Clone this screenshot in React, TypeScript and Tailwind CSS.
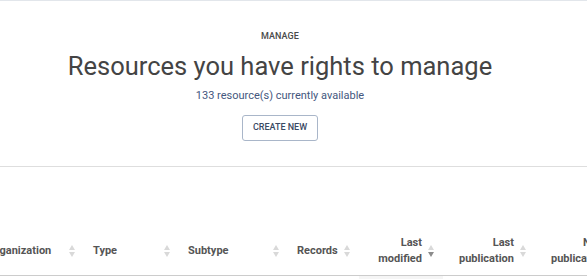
import React from 'react';

type Col = {
  label: React.ReactNode;
  width: string;
  align: 'left' | 'right';
  sort?: 'none' | 'desc';
};

// table header columns, the first one and the last one run past the viewport
const COLUMNS: Col[] = [
  { label: 'Organization', width: 'w-[105px]', align: 'left' },
  { label: 'Type', width: 'w-[95px]', align: 'left' },
  { label: 'Subtype', width: 'w-[109px]', align: 'left' },
  { label: 'Records', width: 'w-[71px]', align: 'left' },
  { label: <>Last<br />modified</>, width: 'w-[84px]', align: 'right', sort: 'desc' },
  { label: <>Last<br />publication</>, width: 'w-[92px]', align: 'right' },
  { label: <>Next<br />publication</>, width: 'w-[92px]', align: 'right' },
];

const SortIcon = ({ dir = 'none' }: { dir?: 'none' | 'desc' }) => (
  <svg width="6" height="12" viewBox="0 0 6 12" className="shrink-0">
    <path d="M3 0 L6 5 H0 Z" fill="#d9d9d9" />
    <path d="M0 7 H6 L3 12 Z" fill={dir === 'desc' ? '#8c8c8c' : '#d9d9d9'} />
  </svg>
);

export default function App() {
  return (
    <div
      className="w-[587px] h-[279px] overflow-hidden bg-white"
      style={{ fontFamily: 'Roboto, "Liberation Sans", sans-serif' }}
    >
      {/* Page header */}
      <div className="border-t border-b border-t-[#e2e6eb] border-b-[#dedede] pb-[25px]">
        <div className="w-[560px] flex flex-col items-center pt-[29px]">
          <p className="text-[9px] leading-[12px] font-medium text-[#4a4a4a] tracking-[0.1px]">MANAGE</p>
          <h1 className="mt-[8px] text-[25.5px] leading-[32px] font-normal text-[#444444]">
            Resources you have rights to manage
          </h1>
          <p className="mt-[7px] text-[11px] leading-[14px] text-[#44577e]">
            133 resource(s) currently available
          </p>
          <button className="mt-[12px] h-[26px] px-[10px] border border-[#a9b6c9] rounded-[3px] bg-white text-[9px] font-medium text-[#3a4963]">
            CREATE NEW
          </button>
        </div>
      </div>

      {/* Table */}
      <div className="pt-[59px]">
        <div className="flex ml-[-21px] h-[50px] border-b border-[#cccccc] w-max">
          {COLUMNS.map((c, i) => (
            <div
              key={i}
              className={`${c.width} shrink-0 flex items-center px-[9px] ${
                c.align === 'left' ? 'justify-between' : 'justify-end gap-[6px] text-right'
              }`}
            >
              <span className="text-[11px] leading-[16px] font-bold text-[#555555] whitespace-nowrap">
                {c.label}
              </span>
              <SortIcon dir={c.sort} />
            </div>
          ))}
        </div>
        <div className="flex ml-[-21px] h-[30px] w-max">
          {COLUMNS.map((c, i) => (
            <div key={i} className={`${c.width} shrink-0 ${c.sort === 'desc' ? 'bg-[#f5f5f5]' : ''}`} />
          ))}
        </div>
      </div>
    </div>
  );
}
